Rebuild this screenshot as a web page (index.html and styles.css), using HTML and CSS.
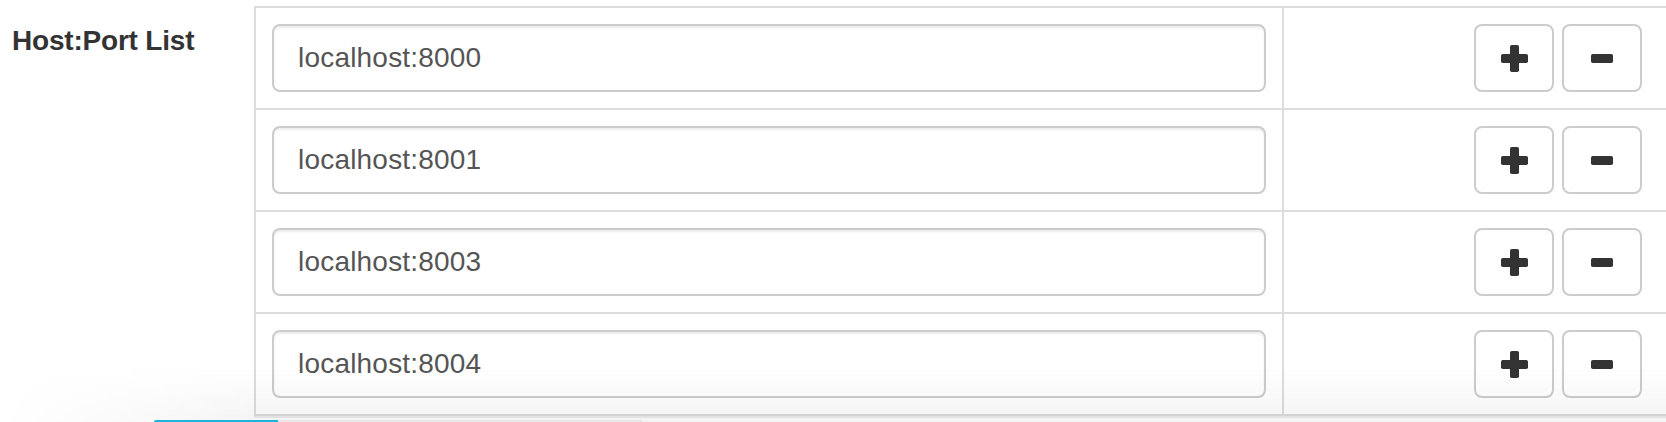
FILE: index.html
```html
<!DOCTYPE html>
<html lang="en">
<head>
<meta charset="utf-8">
<title>Host:Port List</title>
<link rel="stylesheet" href="styles.css">
</head>
<body>
<div class="form-row">
  <label class="field-label">Host:Port List</label>
  <div class="host-list">
    <div class="host-row">
      <div class="cell-input"><input class="host-input" type="text" value="localhost:8000"></div>
      <div class="cell-actions">
        <button class="btn" type="button" aria-label="Add"><svg class="ico" width="27" height="27" viewBox="0 0 27 27"><rect x="0" y="9" width="27" height="9" rx="1.8"/><rect x="9" y="0" width="9" height="27" rx="1.8"/></svg></button>
        <button class="btn" type="button" aria-label="Remove"><svg class="ico" width="22" height="9" viewBox="0 0 22 9"><rect x="0" y="0" width="22" height="9" rx="1.8"/></svg></button>
      </div>
    </div>
    <div class="host-row">
      <div class="cell-input"><input class="host-input" type="text" value="localhost:8001"></div>
      <div class="cell-actions">
        <button class="btn" type="button" aria-label="Add"><svg class="ico" width="27" height="27" viewBox="0 0 27 27"><rect x="0" y="9" width="27" height="9" rx="1.8"/><rect x="9" y="0" width="9" height="27" rx="1.8"/></svg></button>
        <button class="btn" type="button" aria-label="Remove"><svg class="ico" width="22" height="9" viewBox="0 0 22 9"><rect x="0" y="0" width="22" height="9" rx="1.8"/></svg></button>
      </div>
    </div>
    <div class="host-row">
      <div class="cell-input"><input class="host-input" type="text" value="localhost:8003"></div>
      <div class="cell-actions">
        <button class="btn" type="button" aria-label="Add"><svg class="ico" width="27" height="27" viewBox="0 0 27 27"><rect x="0" y="9" width="27" height="9" rx="1.8"/><rect x="9" y="0" width="9" height="27" rx="1.8"/></svg></button>
        <button class="btn" type="button" aria-label="Remove"><svg class="ico" width="22" height="9" viewBox="0 0 22 9"><rect x="0" y="0" width="22" height="9" rx="1.8"/></svg></button>
      </div>
    </div>
    <div class="host-row">
      <div class="cell-input"><input class="host-input" type="text" value="localhost:8004"></div>
      <div class="cell-actions">
        <button class="btn" type="button" aria-label="Add"><svg class="ico" width="27" height="27" viewBox="0 0 27 27"><rect x="0" y="9" width="27" height="9" rx="1.8"/><rect x="9" y="0" width="9" height="27" rx="1.8"/></svg></button>
        <button class="btn" type="button" aria-label="Remove"><svg class="ico" width="22" height="9" viewBox="0 0 22 9"><rect x="0" y="0" width="22" height="9" rx="1.8"/></svg></button>
      </div>
    </div>
  </div>
</div>
<div class="bottom-fade"></div>
<div class="bottom-tab"><span class="bottom-tab-active"></span></div>
</body>
</html>
```

FILE: styles.css
```css
html, body {
  margin: 0;
  padding: 0;
  background: #fff;
  overflow: hidden;
}

body {
  font-family: "Liberation Sans", Arial, Helvetica, sans-serif;
  color: #333;
  width: 1666px;
  height: 422px;
  position: relative;
}

.form-row {
  display: flex;
  align-items: flex-start;
  padding-top: 6px;
}

.field-label {
  width: 242px;
  padding-left: 12px;
  padding-top: 15px;
  font-size: 28px;
  line-height: 40px;
  font-weight: bold;
  color: #333;
  letter-spacing: -0.2px;
}

.host-list {
  flex: 1;
  border-top: 2px solid #ddd;
  border-left: 2px solid #ddd;
  box-shadow: 0 2px 0 #ececec;
}

.host-row {
  display: flex;
  border-bottom: 2px solid #ddd;
}

.cell-input {
  width: 994px;
  padding: 16px;
  border-right: 2px solid #ddd;
}

.host-input {
  box-sizing: border-box;
  display: block;
  width: 994px;
  height: 68px;
  margin: 0;
  padding: 0 24px;
  border: 2px solid #ccc;
  border-radius: 8px;
  background: #fff;
  box-shadow: inset 0 2px 2px rgba(0, 0, 0, 0.075);
  font-family: "Liberation Sans", Arial, Helvetica, sans-serif;
  font-size: 28px;
  letter-spacing: 0.2px;
  color: #555;
  outline: none;
}

.cell-actions {
  flex: 1;
  display: flex;
  justify-content: flex-end;
  align-items: center;
  gap: 8px;
  padding: 16px 24px 16px 16px;
}

.btn {
  box-sizing: border-box;
  width: 80px;
  height: 68px;
  margin: 0;
  padding: 0;
  display: flex;
  align-items: center;
  justify-content: center;
  border: 2px solid #ccc;
  border-radius: 8px;
  background: #fff;
  cursor: pointer;
}

.ico {
  display: block;
  fill: #333;
}

.bottom-fade {
  position: absolute;
  left: 0;
  right: 0;
  bottom: 0;
  height: 56px;
  pointer-events: none;
  background: linear-gradient(to bottom, rgba(0, 0, 0, 0) 0%, rgba(0, 0, 0, 0.045) 100%);
  -webkit-mask-image: linear-gradient(to right, rgba(0,0,0,0) 0px, #000 260px);
  mask-image: linear-gradient(to right, rgba(0,0,0,0) 0px, #000 260px);
}

.bottom-tab {
  position: absolute;
  left: 154px;
  bottom: 0;
  width: 487px;
  height: 2px;
  background: #e8e8e8;
  border-right: 1px solid #ddd;
  border-radius: 2px 0 0 0;
}

.bottom-tab-active {
  display: block;
  width: 124px;
  height: 2px;
  background: #1bb5db;
  border-radius: 2px 0 0 0;
}
```
